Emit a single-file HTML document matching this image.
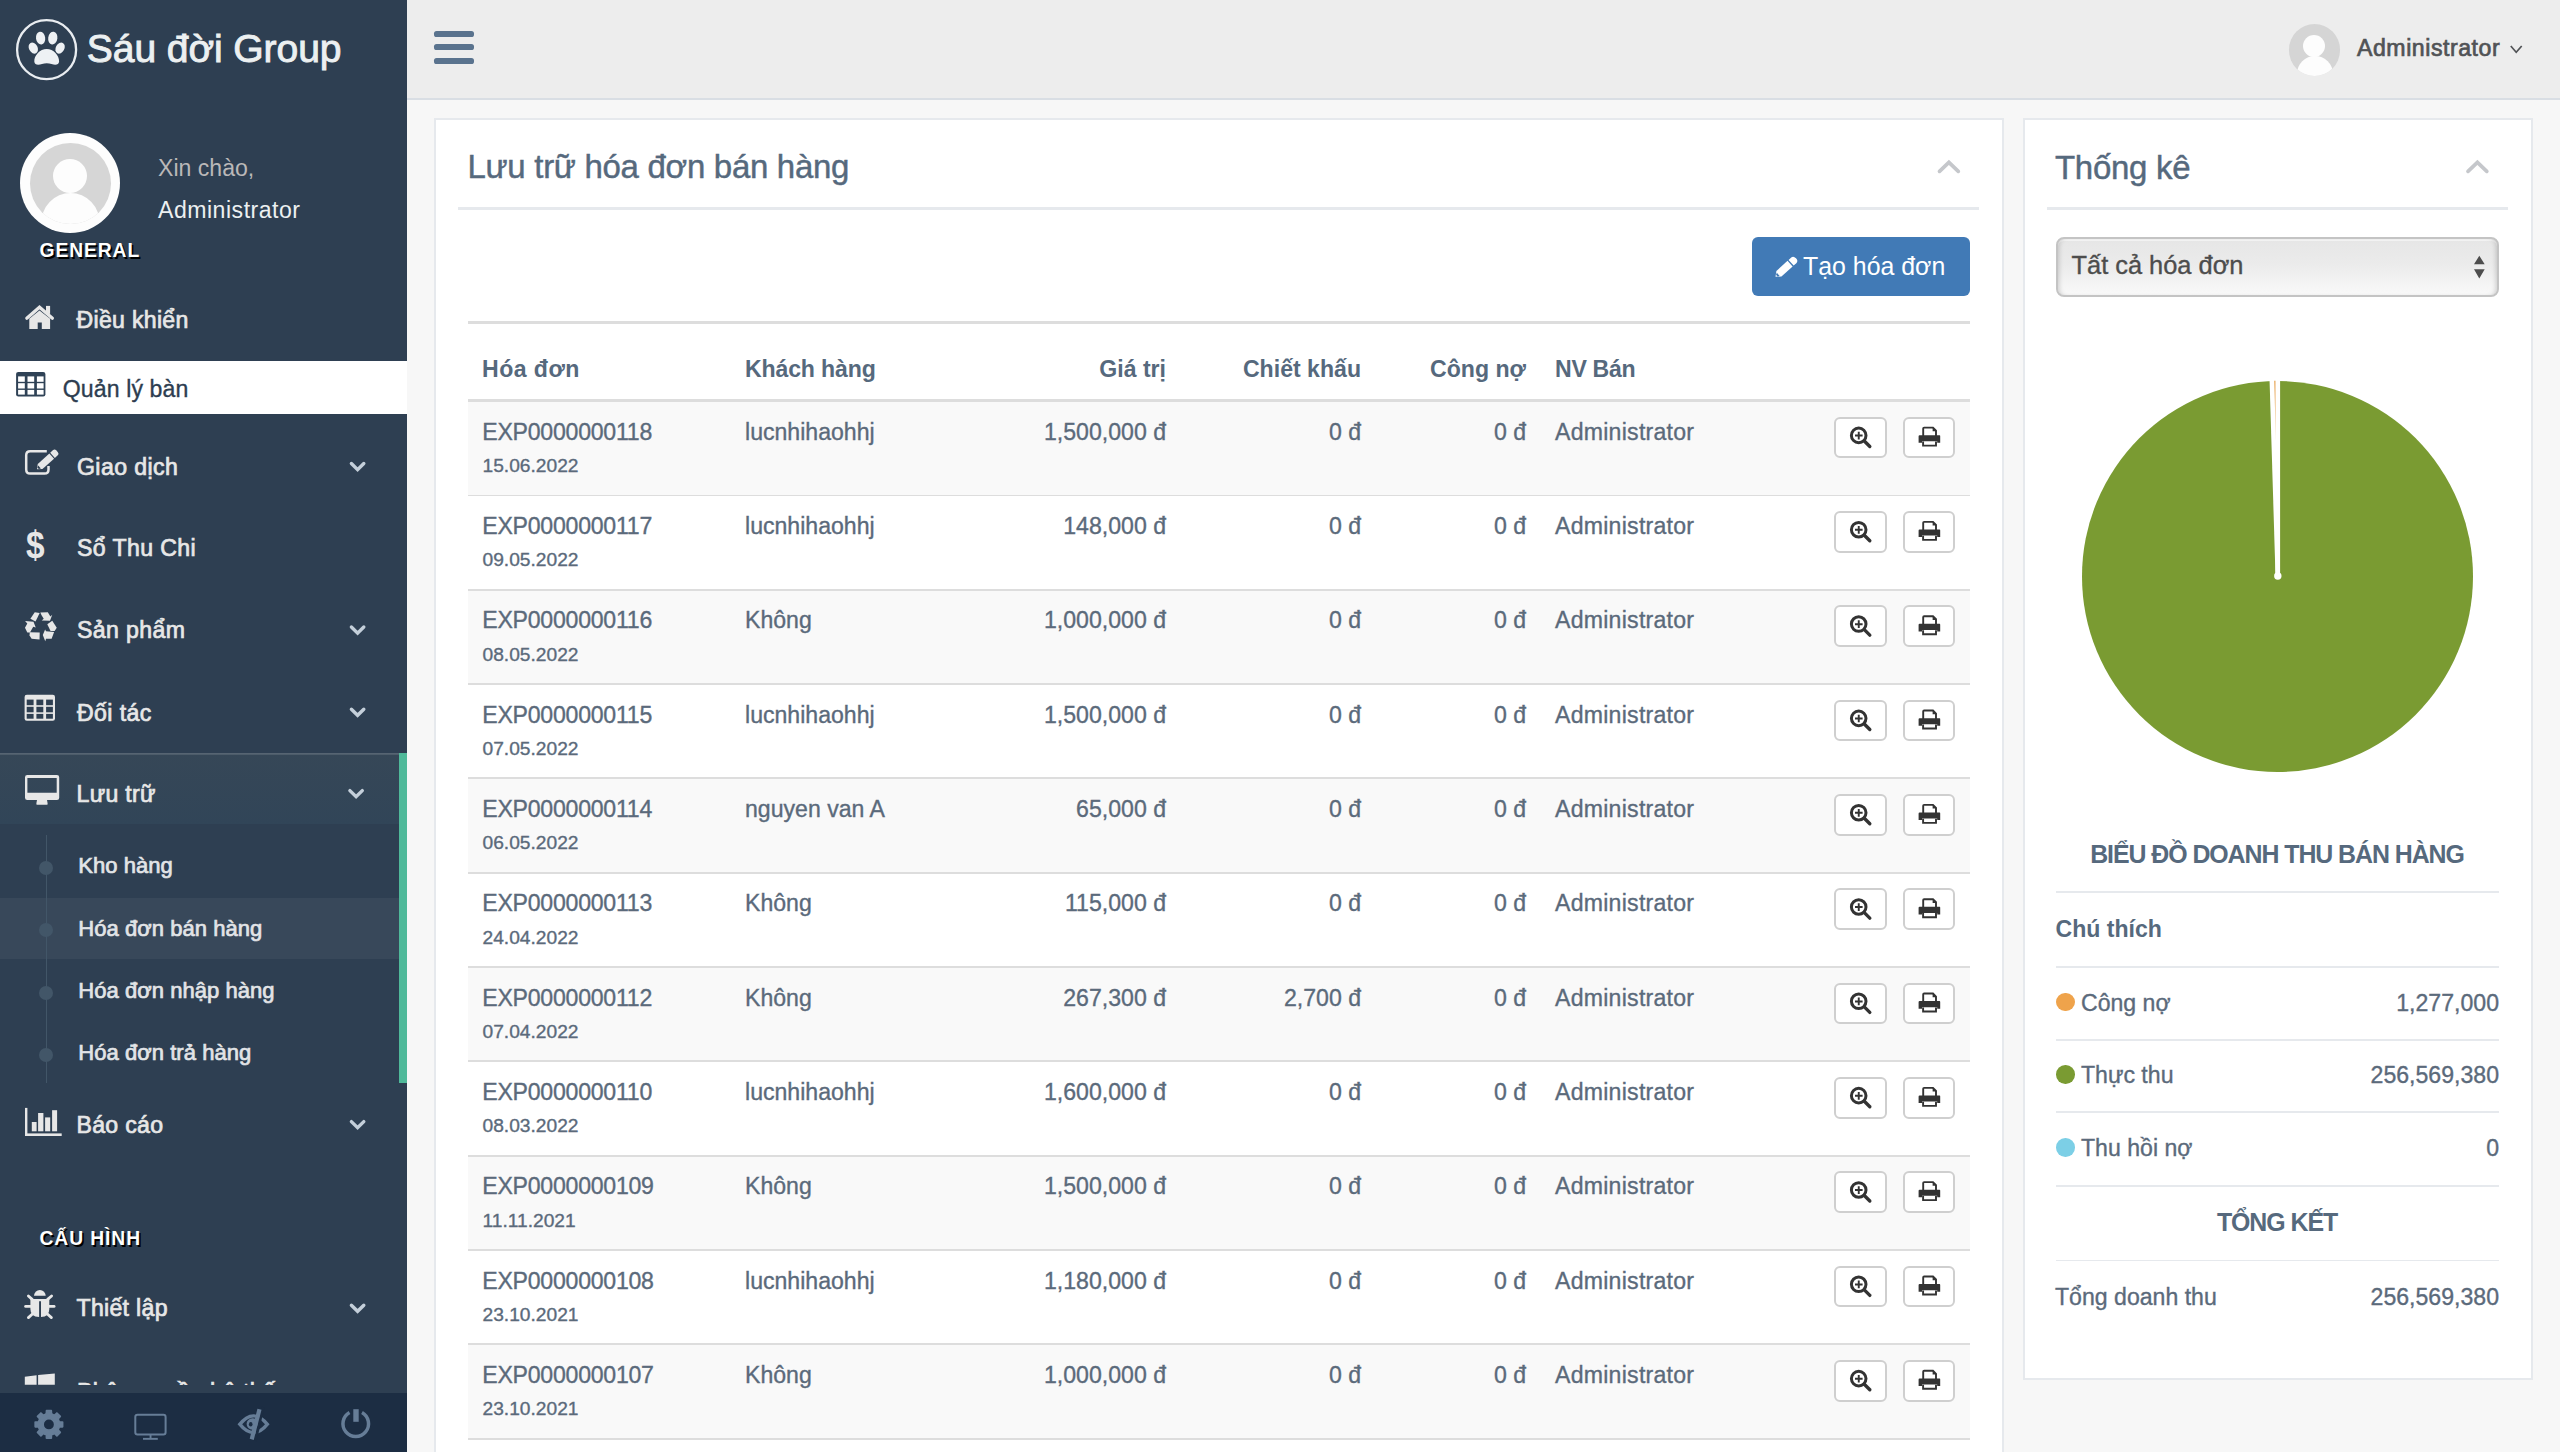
<!DOCTYPE html><html><head><meta charset="utf-8"><style>
html,body{margin:0;padding:0;width:2560px;height:1452px;overflow:hidden;background:#F7F7F7;}
body{position:relative;font-family:"Liberation Sans",sans-serif;}
.t{position:absolute;white-space:nowrap;line-height:1;}
.r{position:absolute;}
.med{-webkit-text-stroke:0.7px currentColor;}
.rg{-webkit-text-stroke:0.35px currentColor;}
.rt{-webkit-text-stroke:0.45px currentColor;}
svg{position:absolute;overflow:visible;}
</style></head><body>
<div class="r" style="left:0px;top:0px;width:407px;height:1452px;background:#2E3F52;"></div>
<div class="t " style="left:86.80px;top:28.90px;font-size:39.1px;color:#ECF0F1;-webkit-text-stroke:0.9px #ECF0F1;letter-spacing:-0.1px;">Sáu đời Group</div>
<div class="r" style="left:20px;top:133px;width:100px;height:100px;border-radius:50%;background:#FDFDFD;"></div>
<div class="r" style="left:29.5px;top:142.5px;width:81px;height:81px;border-radius:50%;background:#D6D6D6;overflow:hidden;"><div style="position:absolute;left:23px;top:16.5px;width:34px;height:34px;border-radius:50%;background:#FDFDFD;"></div><div style="position:absolute;left:11px;top:50px;width:59px;height:62px;border-radius:50%;background:#FDFDFD;"></div></div>
<div class="t " style="left:158.00px;top:156.75px;font-size:23.1px;color:#BAB8B8;">Xin chào,</div>
<div class="t " style="left:158.00px;top:199.25px;font-size:23.1px;color:#ECF0F1;letter-spacing:0.5px;">Administrator</div>
<div class="t " style="left:39.50px;top:241.16px;font-size:19.3px;color:#FFFFFF;font-weight:700;letter-spacing:0.9px;text-shadow:1.8px 1.8px 0 #000;">GENERAL</div>
<div class="t med" style="left:76.50px;top:309.45px;font-size:23.1px;color:#E7E7E7;letter-spacing:0.3px;">Điều khiển</div>
<div class="r" style="left:0px;top:361px;width:407px;height:53px;background:#FFFFFF;"></div>
<div class="t rg" style="left:62.80px;top:378.25px;font-size:23.1px;color:#2D3D50;letter-spacing:0.1px;">Quản lý bàn</div>
<div class="t med" style="left:77.00px;top:455.95px;font-size:23.1px;color:#E7E7E7;letter-spacing:0.4px;">Giao dịch</div>
<div class="t med" style="left:77.00px;top:536.95px;font-size:23.1px;color:#E7E7E7;letter-spacing:0.4px;">Sổ Thu Chi</div>
<div class="t med" style="left:77.00px;top:619.35px;font-size:23.1px;color:#E7E7E7;letter-spacing:0.4px;">Sản phẩm</div>
<div class="t med" style="left:77.00px;top:701.75px;font-size:23.1px;color:#E7E7E7;letter-spacing:0.4px;">Đối tác</div>
<div class="r" style="left:0;top:753px;width:407px;height:71px;background:linear-gradient(#364757,#314558);box-shadow:inset 0 1.8px 0 rgba(255,255,255,0.16);"></div>
<div class="r" style="left:398.5px;top:753px;width:8.5px;height:330px;background:#4FB99A;"></div>
<div class="t med" style="left:76.50px;top:783.05px;font-size:23.1px;color:#E7E7E7;letter-spacing:0.3px;">Lưu trữ</div>
<div class="r" style="left:0px;top:897.5px;width:399px;height:61px;background:rgba(255,255,255,0.05);"></div>
<div class="r" style="left:45.5px;top:834.5px;width:1.8px;height:248.5px;background:#425668;"></div>
<div class="r" style="left:39.3px;top:860.6px;width:14.2px;height:14.2px;border-radius:50%;background:#425668;"></div>
<div class="r" style="left:39.3px;top:922.9px;width:14.2px;height:14.2px;border-radius:50%;background:#425668;"></div>
<div class="r" style="left:39.3px;top:985.9px;width:14.2px;height:14.2px;border-radius:50%;background:#425668;"></div>
<div class="r" style="left:39.3px;top:1047.9px;width:14.2px;height:14.2px;border-radius:50%;background:#425668;"></div>
<div class="t med" style="left:78.30px;top:855.38px;font-size:22px;color:#E2E4E7;letter-spacing:0.05px;">Kho hàng</div>
<div class="t med" style="left:78.30px;top:917.58px;font-size:22px;color:#E2E4E7;letter-spacing:0.05px;">Hóa đơn bán hàng</div>
<div class="t med" style="left:78.30px;top:979.88px;font-size:22px;color:#E2E4E7;letter-spacing:0.05px;">Hóa đơn nhập hàng</div>
<div class="t med" style="left:78.30px;top:1041.88px;font-size:22px;color:#E2E4E7;letter-spacing:0.05px;">Hóa đơn trả hàng</div>
<div class="t med" style="left:76.50px;top:1114.35px;font-size:23.1px;color:#E7E7E7;letter-spacing:0.3px;">Báo cáo</div>
<div class="t " style="left:39.50px;top:1229.26px;font-size:19.3px;color:#FFFFFF;font-weight:700;letter-spacing:0.9px;text-shadow:1.8px 1.8px 0 #000;">CẤU HÌNH</div>
<div class="t med" style="left:76.50px;top:1297.25px;font-size:23.1px;color:#E7E7E7;letter-spacing:0.3px;">Thiết lập</div>
<div class="r" style="left:0;top:1360px;width:407px;height:24.8px;overflow:hidden;"><div class="t med" style="left:77.00px;top:20.75px;font-size:23.1px;color:#E7E7E7;letter-spacing:0.3px;">Phân quyền hệ thống</div>
</div>
<div class="r" style="left:0px;top:1393px;width:407px;height:59px;background:#1C2D43;"></div>
<div class="r" style="left:407px;top:0px;width:2153px;height:98px;background:#EDEDED;"></div>
<div class="r" style="left:407px;top:97.7px;width:2153px;height:2px;background:#D9DEE4;"></div>
<div class="r" style="left:434px;top:31.1px;width:39.7px;height:6.2px;border-radius:2.6px;background:#5A738E;"></div>
<div class="r" style="left:434px;top:44.3px;width:39.7px;height:6.2px;border-radius:2.6px;background:#5A738E;"></div>
<div class="r" style="left:434px;top:57.6px;width:39.7px;height:6.2px;border-radius:2.6px;background:#5A738E;"></div>
<div class="r" style="left:2288.7px;top:24px;width:51.5px;height:51.5px;border-radius:50%;background:#D5D5D5;overflow:hidden;"><div style="position:absolute;left:14.7px;top:11.2px;width:22px;height:22px;border-radius:50%;background:#FDFDFD;"></div><div style="position:absolute;left:8px;top:32px;width:36px;height:36px;border-radius:50%;background:#FDFDFD;"></div></div>
<div class="t med" style="left:2357.00px;top:37.35px;font-size:23.1px;color:#515356;letter-spacing:0.55px;">Administrator</div>
<div class="r" style="left:434px;top:118px;width:1566px;height:1400px;background:#fff;border:2px solid #E6E9ED;"></div>
<div class="t rt" style="left:467.50px;top:150.07px;font-size:33px;color:#56697D;letter-spacing:-0.3px;">Lưu trữ hóa đơn bán hàng</div>
<div class="r" style="left:458.4px;top:206.5px;width:1521px;height:3.5px;background:#E6E9ED;"></div>
<div class="r" style="left:1752.3px;top:236.9px;width:217.7px;height:59.5px;border-radius:6px;background:#417AB6;"></div>
<div class="t " style="left:1803.00px;top:254.42px;font-size:24.9px;color:#FFFFFF;">Tạo hóa đơn</div>
<div class="r" style="left:468px;top:320.5px;width:1502px;height:3px;background:#DDDDDD;"></div>
<div class="t " style="left:482.00px;top:358.45px;font-size:23.1px;color:#56697D;font-weight:700;letter-spacing:0.45px;">Hóa đơn</div>
<div class="t " style="left:745.00px;top:358.45px;font-size:23.1px;color:#56697D;font-weight:700;letter-spacing:-0.15px;">Khách hàng</div>
<div class="t " style="right:1394.00px;top:358.45px;font-size:23.1px;color:#56697D;font-weight:700;letter-spacing:0px;">Giá trị</div>
<div class="t " style="right:1199.00px;top:358.45px;font-size:23.1px;color:#56697D;font-weight:700;letter-spacing:0px;">Chiết khấu</div>
<div class="t " style="right:1034.00px;top:358.45px;font-size:23.1px;color:#56697D;font-weight:700;letter-spacing:0px;">Công nợ</div>
<div class="t " style="left:1555.00px;top:358.45px;font-size:23.1px;color:#56697D;font-weight:700;letter-spacing:-0.3px;">NV Bán</div>
<div class="r" style="left:468px;top:399px;width:1502px;height:3px;background:#DDDDDD;"></div>
<div class="r" style="left:468px;top:402.0px;width:1502px;height:92.52px;background:#F9F9F9;"></div>
<div class="t rg" style="left:482.30px;top:420.65px;font-size:23.1px;color:#5B6A7B;letter-spacing:-0.25px;">EXP0000000118</div>
<div class="t rg" style="left:482.50px;top:456.15px;font-size:19.2px;color:#5B6A7B;">15.06.2022</div>
<div class="t rg" style="left:745.00px;top:420.65px;font-size:23.1px;color:#5B6A7B;">lucnhihaohhj</div>
<div class="t rg" style="right:1394.00px;top:420.65px;font-size:23.1px;color:#5B6A7B;">1,500,000 đ</div>
<div class="t rg" style="right:1199.00px;top:420.65px;font-size:23.1px;color:#5B6A7B;">0 đ</div>
<div class="t rg" style="right:1034.00px;top:420.65px;font-size:23.1px;color:#5B6A7B;">0 đ</div>
<div class="t rg" style="left:1555.00px;top:420.65px;font-size:23.1px;color:#5B6A7B;letter-spacing:0.25px;">Administrator</div>
<div class="r" style="left:1834.4px;top:416.80px;width:48.6px;height:37.7px;border:2px solid #CFCFCF;border-radius:6px;background:#fff;"></div>
<div class="r" style="left:1902.7px;top:416.80px;width:48.6px;height:37.7px;border:2px solid #CFCFCF;border-radius:6px;background:#fff;"></div>
<div class="r" style="left:468px;top:494.52px;width:1502px;height:1.8px;background:#DDDDDD;"></div>
<div class="r" style="left:468px;top:496.32px;width:1502px;height:92.52px;background:#FFFFFF;"></div>
<div class="t rg" style="left:482.30px;top:514.97px;font-size:23.1px;color:#5B6A7B;letter-spacing:-0.25px;">EXP0000000117</div>
<div class="t rg" style="left:482.50px;top:550.47px;font-size:19.2px;color:#5B6A7B;">09.05.2022</div>
<div class="t rg" style="left:745.00px;top:514.97px;font-size:23.1px;color:#5B6A7B;">lucnhihaohhj</div>
<div class="t rg" style="right:1394.00px;top:514.97px;font-size:23.1px;color:#5B6A7B;">148,000 đ</div>
<div class="t rg" style="right:1199.00px;top:514.97px;font-size:23.1px;color:#5B6A7B;">0 đ</div>
<div class="t rg" style="right:1034.00px;top:514.97px;font-size:23.1px;color:#5B6A7B;">0 đ</div>
<div class="t rg" style="left:1555.00px;top:514.97px;font-size:23.1px;color:#5B6A7B;letter-spacing:0.25px;">Administrator</div>
<div class="r" style="left:1834.4px;top:511.12px;width:48.6px;height:37.7px;border:2px solid #CFCFCF;border-radius:6px;background:#fff;"></div>
<div class="r" style="left:1902.7px;top:511.12px;width:48.6px;height:37.7px;border:2px solid #CFCFCF;border-radius:6px;background:#fff;"></div>
<div class="r" style="left:468px;top:588.84px;width:1502px;height:1.8px;background:#DDDDDD;"></div>
<div class="r" style="left:468px;top:590.64px;width:1502px;height:92.52px;background:#F9F9F9;"></div>
<div class="t rg" style="left:482.30px;top:609.29px;font-size:23.1px;color:#5B6A7B;letter-spacing:-0.25px;">EXP0000000116</div>
<div class="t rg" style="left:482.50px;top:644.79px;font-size:19.2px;color:#5B6A7B;">08.05.2022</div>
<div class="t rg" style="left:745.00px;top:609.29px;font-size:23.1px;color:#5B6A7B;">Không</div>
<div class="t rg" style="right:1394.00px;top:609.29px;font-size:23.1px;color:#5B6A7B;">1,000,000 đ</div>
<div class="t rg" style="right:1199.00px;top:609.29px;font-size:23.1px;color:#5B6A7B;">0 đ</div>
<div class="t rg" style="right:1034.00px;top:609.29px;font-size:23.1px;color:#5B6A7B;">0 đ</div>
<div class="t rg" style="left:1555.00px;top:609.29px;font-size:23.1px;color:#5B6A7B;letter-spacing:0.25px;">Administrator</div>
<div class="r" style="left:1834.4px;top:605.44px;width:48.6px;height:37.7px;border:2px solid #CFCFCF;border-radius:6px;background:#fff;"></div>
<div class="r" style="left:1902.7px;top:605.44px;width:48.6px;height:37.7px;border:2px solid #CFCFCF;border-radius:6px;background:#fff;"></div>
<div class="r" style="left:468px;top:683.1600000000001px;width:1502px;height:1.8px;background:#DDDDDD;"></div>
<div class="r" style="left:468px;top:684.96px;width:1502px;height:92.52px;background:#FFFFFF;"></div>
<div class="t rg" style="left:482.30px;top:703.61px;font-size:23.1px;color:#5B6A7B;letter-spacing:-0.25px;">EXP0000000115</div>
<div class="t rg" style="left:482.50px;top:739.11px;font-size:19.2px;color:#5B6A7B;">07.05.2022</div>
<div class="t rg" style="left:745.00px;top:703.61px;font-size:23.1px;color:#5B6A7B;">lucnhihaohhj</div>
<div class="t rg" style="right:1394.00px;top:703.61px;font-size:23.1px;color:#5B6A7B;">1,500,000 đ</div>
<div class="t rg" style="right:1199.00px;top:703.61px;font-size:23.1px;color:#5B6A7B;">0 đ</div>
<div class="t rg" style="right:1034.00px;top:703.61px;font-size:23.1px;color:#5B6A7B;">0 đ</div>
<div class="t rg" style="left:1555.00px;top:703.61px;font-size:23.1px;color:#5B6A7B;letter-spacing:0.25px;">Administrator</div>
<div class="r" style="left:1834.4px;top:699.76px;width:48.6px;height:37.7px;border:2px solid #CFCFCF;border-radius:6px;background:#fff;"></div>
<div class="r" style="left:1902.7px;top:699.76px;width:48.6px;height:37.7px;border:2px solid #CFCFCF;border-radius:6px;background:#fff;"></div>
<div class="r" style="left:468px;top:777.48px;width:1502px;height:1.8px;background:#DDDDDD;"></div>
<div class="r" style="left:468px;top:779.28px;width:1502px;height:92.52px;background:#F9F9F9;"></div>
<div class="t rg" style="left:482.30px;top:797.93px;font-size:23.1px;color:#5B6A7B;letter-spacing:-0.25px;">EXP0000000114</div>
<div class="t rg" style="left:482.50px;top:833.43px;font-size:19.2px;color:#5B6A7B;">06.05.2022</div>
<div class="t rg" style="left:745.00px;top:797.93px;font-size:23.1px;color:#5B6A7B;">nguyen van A</div>
<div class="t rg" style="right:1394.00px;top:797.93px;font-size:23.1px;color:#5B6A7B;">65,000 đ</div>
<div class="t rg" style="right:1199.00px;top:797.93px;font-size:23.1px;color:#5B6A7B;">0 đ</div>
<div class="t rg" style="right:1034.00px;top:797.93px;font-size:23.1px;color:#5B6A7B;">0 đ</div>
<div class="t rg" style="left:1555.00px;top:797.93px;font-size:23.1px;color:#5B6A7B;letter-spacing:0.25px;">Administrator</div>
<div class="r" style="left:1834.4px;top:794.08px;width:48.6px;height:37.7px;border:2px solid #CFCFCF;border-radius:6px;background:#fff;"></div>
<div class="r" style="left:1902.7px;top:794.08px;width:48.6px;height:37.7px;border:2px solid #CFCFCF;border-radius:6px;background:#fff;"></div>
<div class="r" style="left:468px;top:871.8px;width:1502px;height:1.8px;background:#DDDDDD;"></div>
<div class="r" style="left:468px;top:873.5999999999999px;width:1502px;height:92.52px;background:#FFFFFF;"></div>
<div class="t rg" style="left:482.30px;top:892.25px;font-size:23.1px;color:#5B6A7B;letter-spacing:-0.25px;">EXP0000000113</div>
<div class="t rg" style="left:482.50px;top:927.75px;font-size:19.2px;color:#5B6A7B;">24.04.2022</div>
<div class="t rg" style="left:745.00px;top:892.25px;font-size:23.1px;color:#5B6A7B;">Không</div>
<div class="t rg" style="right:1394.00px;top:892.25px;font-size:23.1px;color:#5B6A7B;">115,000 đ</div>
<div class="t rg" style="right:1199.00px;top:892.25px;font-size:23.1px;color:#5B6A7B;">0 đ</div>
<div class="t rg" style="right:1034.00px;top:892.25px;font-size:23.1px;color:#5B6A7B;">0 đ</div>
<div class="t rg" style="left:1555.00px;top:892.25px;font-size:23.1px;color:#5B6A7B;letter-spacing:0.25px;">Administrator</div>
<div class="r" style="left:1834.4px;top:888.40px;width:48.6px;height:37.7px;border:2px solid #CFCFCF;border-radius:6px;background:#fff;"></div>
<div class="r" style="left:1902.7px;top:888.40px;width:48.6px;height:37.7px;border:2px solid #CFCFCF;border-radius:6px;background:#fff;"></div>
<div class="r" style="left:468px;top:966.12px;width:1502px;height:1.8px;background:#DDDDDD;"></div>
<div class="r" style="left:468px;top:967.92px;width:1502px;height:92.52px;background:#F9F9F9;"></div>
<div class="t rg" style="left:482.30px;top:986.57px;font-size:23.1px;color:#5B6A7B;letter-spacing:-0.25px;">EXP0000000112</div>
<div class="t rg" style="left:482.50px;top:1022.07px;font-size:19.2px;color:#5B6A7B;">07.04.2022</div>
<div class="t rg" style="left:745.00px;top:986.57px;font-size:23.1px;color:#5B6A7B;">Không</div>
<div class="t rg" style="right:1394.00px;top:986.57px;font-size:23.1px;color:#5B6A7B;">267,300 đ</div>
<div class="t rg" style="right:1199.00px;top:986.57px;font-size:23.1px;color:#5B6A7B;">2,700 đ</div>
<div class="t rg" style="right:1034.00px;top:986.57px;font-size:23.1px;color:#5B6A7B;">0 đ</div>
<div class="t rg" style="left:1555.00px;top:986.57px;font-size:23.1px;color:#5B6A7B;letter-spacing:0.25px;">Administrator</div>
<div class="r" style="left:1834.4px;top:982.72px;width:48.6px;height:37.7px;border:2px solid #CFCFCF;border-radius:6px;background:#fff;"></div>
<div class="r" style="left:1902.7px;top:982.72px;width:48.6px;height:37.7px;border:2px solid #CFCFCF;border-radius:6px;background:#fff;"></div>
<div class="r" style="left:468px;top:1060.44px;width:1502px;height:1.8px;background:#DDDDDD;"></div>
<div class="r" style="left:468px;top:1062.24px;width:1502px;height:92.52px;background:#FFFFFF;"></div>
<div class="t rg" style="left:482.30px;top:1080.89px;font-size:23.1px;color:#5B6A7B;letter-spacing:-0.25px;">EXP0000000110</div>
<div class="t rg" style="left:482.50px;top:1116.39px;font-size:19.2px;color:#5B6A7B;">08.03.2022</div>
<div class="t rg" style="left:745.00px;top:1080.89px;font-size:23.1px;color:#5B6A7B;">lucnhihaohhj</div>
<div class="t rg" style="right:1394.00px;top:1080.89px;font-size:23.1px;color:#5B6A7B;">1,600,000 đ</div>
<div class="t rg" style="right:1199.00px;top:1080.89px;font-size:23.1px;color:#5B6A7B;">0 đ</div>
<div class="t rg" style="right:1034.00px;top:1080.89px;font-size:23.1px;color:#5B6A7B;">0 đ</div>
<div class="t rg" style="left:1555.00px;top:1080.89px;font-size:23.1px;color:#5B6A7B;letter-spacing:0.25px;">Administrator</div>
<div class="r" style="left:1834.4px;top:1077.04px;width:48.6px;height:37.7px;border:2px solid #CFCFCF;border-radius:6px;background:#fff;"></div>
<div class="r" style="left:1902.7px;top:1077.04px;width:48.6px;height:37.7px;border:2px solid #CFCFCF;border-radius:6px;background:#fff;"></div>
<div class="r" style="left:468px;top:1154.76px;width:1502px;height:1.8px;background:#DDDDDD;"></div>
<div class="r" style="left:468px;top:1156.56px;width:1502px;height:92.52px;background:#F9F9F9;"></div>
<div class="t rg" style="left:482.30px;top:1175.21px;font-size:23.1px;color:#5B6A7B;letter-spacing:-0.25px;">EXP0000000109</div>
<div class="t rg" style="left:482.50px;top:1210.71px;font-size:19.2px;color:#5B6A7B;">11.11.2021</div>
<div class="t rg" style="left:745.00px;top:1175.21px;font-size:23.1px;color:#5B6A7B;">Không</div>
<div class="t rg" style="right:1394.00px;top:1175.21px;font-size:23.1px;color:#5B6A7B;">1,500,000 đ</div>
<div class="t rg" style="right:1199.00px;top:1175.21px;font-size:23.1px;color:#5B6A7B;">0 đ</div>
<div class="t rg" style="right:1034.00px;top:1175.21px;font-size:23.1px;color:#5B6A7B;">0 đ</div>
<div class="t rg" style="left:1555.00px;top:1175.21px;font-size:23.1px;color:#5B6A7B;letter-spacing:0.25px;">Administrator</div>
<div class="r" style="left:1834.4px;top:1171.36px;width:48.6px;height:37.7px;border:2px solid #CFCFCF;border-radius:6px;background:#fff;"></div>
<div class="r" style="left:1902.7px;top:1171.36px;width:48.6px;height:37.7px;border:2px solid #CFCFCF;border-radius:6px;background:#fff;"></div>
<div class="r" style="left:468px;top:1249.08px;width:1502px;height:1.8px;background:#DDDDDD;"></div>
<div class="r" style="left:468px;top:1250.8799999999999px;width:1502px;height:92.52px;background:#FFFFFF;"></div>
<div class="t rg" style="left:482.30px;top:1269.53px;font-size:23.1px;color:#5B6A7B;letter-spacing:-0.25px;">EXP0000000108</div>
<div class="t rg" style="left:482.50px;top:1305.03px;font-size:19.2px;color:#5B6A7B;">23.10.2021</div>
<div class="t rg" style="left:745.00px;top:1269.53px;font-size:23.1px;color:#5B6A7B;">lucnhihaohhj</div>
<div class="t rg" style="right:1394.00px;top:1269.53px;font-size:23.1px;color:#5B6A7B;">1,180,000 đ</div>
<div class="t rg" style="right:1199.00px;top:1269.53px;font-size:23.1px;color:#5B6A7B;">0 đ</div>
<div class="t rg" style="right:1034.00px;top:1269.53px;font-size:23.1px;color:#5B6A7B;">0 đ</div>
<div class="t rg" style="left:1555.00px;top:1269.53px;font-size:23.1px;color:#5B6A7B;letter-spacing:0.25px;">Administrator</div>
<div class="r" style="left:1834.4px;top:1265.68px;width:48.6px;height:37.7px;border:2px solid #CFCFCF;border-radius:6px;background:#fff;"></div>
<div class="r" style="left:1902.7px;top:1265.68px;width:48.6px;height:37.7px;border:2px solid #CFCFCF;border-radius:6px;background:#fff;"></div>
<div class="r" style="left:468px;top:1343.3999999999999px;width:1502px;height:1.8px;background:#DDDDDD;"></div>
<div class="r" style="left:468px;top:1345.1999999999998px;width:1502px;height:92.52px;background:#F9F9F9;"></div>
<div class="t rg" style="left:482.30px;top:1363.85px;font-size:23.1px;color:#5B6A7B;letter-spacing:-0.25px;">EXP0000000107</div>
<div class="t rg" style="left:482.50px;top:1399.35px;font-size:19.2px;color:#5B6A7B;">23.10.2021</div>
<div class="t rg" style="left:745.00px;top:1363.85px;font-size:23.1px;color:#5B6A7B;">Không</div>
<div class="t rg" style="right:1394.00px;top:1363.85px;font-size:23.1px;color:#5B6A7B;">1,000,000 đ</div>
<div class="t rg" style="right:1199.00px;top:1363.85px;font-size:23.1px;color:#5B6A7B;">0 đ</div>
<div class="t rg" style="right:1034.00px;top:1363.85px;font-size:23.1px;color:#5B6A7B;">0 đ</div>
<div class="t rg" style="left:1555.00px;top:1363.85px;font-size:23.1px;color:#5B6A7B;letter-spacing:0.25px;">Administrator</div>
<div class="r" style="left:1834.4px;top:1360.00px;width:48.6px;height:37.7px;border:2px solid #CFCFCF;border-radius:6px;background:#fff;"></div>
<div class="r" style="left:1902.7px;top:1360.00px;width:48.6px;height:37.7px;border:2px solid #CFCFCF;border-radius:6px;background:#fff;"></div>
<div class="r" style="left:468px;top:1437.72px;width:1502px;height:1.8px;background:#DDDDDD;"></div>
<div class="r" style="left:2023px;top:118px;width:506px;height:1258px;background:#fff;border:2px solid #E6E9ED;"></div>
<div class="t rt" style="left:2055.00px;top:151.07px;font-size:33px;color:#56697D;letter-spacing:-0.3px;">Thống kê</div>
<div class="r" style="left:2046.8px;top:206.5px;width:461.5px;height:3.5px;background:#E6E9ED;"></div>
<div class="r" style="left:2056px;top:237px;width:439px;height:55.6px;border:2px solid #C4C4C4;border-radius:8px;background:linear-gradient(#E6E6E6,#EBEBEB 45%,#F9F9F9);box-shadow:inset 4px 0 5px -3px rgba(0,0,0,0.18),inset -4px 0 5px -3px rgba(0,0,0,0.18),inset 0 2px 0 #F4F4F4;"></div>
<div class="t rg" style="left:2071.50px;top:253.30px;font-size:25.4px;color:#4D4D4D;">Tất cả hóa đơn</div>
<div class="r" style="left:2082.4px;top:380.6px;width:391px;height:391px;border-radius:50%;background:#7A9B32;"></div>
<div class="t " style="left:1777.00px;width:1000px;text-align:center;top:842.22px;font-size:24.9px;color:#56697D;font-weight:700;letter-spacing:-1.05px;">BIỂU ĐỒ DOANH THU BÁN HÀNG</div>
<div class="r" style="left:2055.5px;top:891px;width:443.5px;height:1.8px;background:#E6E9ED;"></div>
<div class="r" style="left:2055.5px;top:966px;width:443.5px;height:1.8px;background:#E6E9ED;"></div>
<div class="r" style="left:2055.5px;top:1039px;width:443.5px;height:1.8px;background:#E6E9ED;"></div>
<div class="r" style="left:2055.5px;top:1111.4px;width:443.5px;height:1.8px;background:#E6E9ED;"></div>
<div class="r" style="left:2055.5px;top:1185px;width:443.5px;height:1.8px;background:#E6E9ED;"></div>
<div class="r" style="left:2055.5px;top:1259.5px;width:443.5px;height:1.8px;background:#E6E9ED;"></div>
<div class="t " style="left:2055.50px;top:917.85px;font-size:23.1px;color:#56697D;font-weight:700;">Chú thích</div>
<div class="r" style="left:2056.4px;top:992.7px;width:18.6px;height:18.6px;border-radius:50%;background:#EFA34B;"></div>
<div class="t rg" style="left:2081.00px;top:991.95px;font-size:23.1px;color:#5B6A7B;">Công nợ</div>
<div class="t rg" style="right:61.00px;top:991.95px;font-size:23.1px;color:#5B6A7B;">1,277,000</div>
<div class="r" style="left:2056.4px;top:1065.2px;width:18.6px;height:18.6px;border-radius:50%;background:#7A9B32;"></div>
<div class="t rg" style="left:2081.00px;top:1064.45px;font-size:23.1px;color:#5B6A7B;">Thực thu</div>
<div class="t rg" style="right:61.00px;top:1064.45px;font-size:23.1px;color:#5B6A7B;">256,569,380</div>
<div class="r" style="left:2056.4px;top:1138.2px;width:18.6px;height:18.6px;border-radius:50%;background:#7CCFE6;"></div>
<div class="t rg" style="left:2081.00px;top:1137.45px;font-size:23.1px;color:#5B6A7B;">Thu hồi nợ</div>
<div class="t rg" style="right:61.00px;top:1137.45px;font-size:23.1px;color:#5B6A7B;">0</div>
<div class="t " style="left:1777.00px;width:1000px;text-align:center;top:1210.32px;font-size:24.9px;color:#56697D;font-weight:700;letter-spacing:-1.05px;">TỔNG KẾT</div>
<div class="t rg" style="left:2055.00px;top:1285.95px;font-size:23.1px;color:#5B6A7B;">Tổng doanh thu</div>
<div class="t rg" style="right:61.00px;top:1285.95px;font-size:23.1px;color:#5B6A7B;">256,569,380</div>
<div class="t " style="left:25.50px;top:525.96px;font-size:38.8px;color:#E7E7E7;font-weight:700;transform:scaleX(0.86);transform-origin:0 0;">$</div>
<svg width="2560" height="1452" style="left:0;top:0;position:absolute;"><defs><clipPath id="clipw"><rect x="0" y="1360" width="407" height="24.8"/></clipPath></defs>
<circle cx="46.6" cy="49.7" r="29.5" fill="none" stroke="#E9EDF1" stroke-width="2.3"/>
<ellipse cx="40.6" cy="38.1" rx="4.6" ry="6.5" transform="rotate(-8 40.6 38.1)" fill="#EEF1F4"/>
<ellipse cx="52.8" cy="38.1" rx="4.6" ry="6.5" transform="rotate(8 52.8 38.1)" fill="#EEF1F4"/>
<ellipse cx="33.3" cy="48.1" rx="4.3" ry="5.9" transform="rotate(-28 33.3 48.1)" fill="#EEF1F4"/>
<ellipse cx="60.1" cy="48.1" rx="4.3" ry="5.9" transform="rotate(28 60.1 48.1)" fill="#EEF1F4"/>
<path d="M34.3,61.5 C34,55.5 40,49 46.7,49 C53.4,49 59.4,55.5 59.1,61.5 C58.8,64.8 55.5,65.3 51.5,63.9 C48.5,62.9 45,62.9 42,63.9 C38,65.3 34.6,64.8 34.3,61.5 Z" fill="#EEF1F4"/>
<polyline points="26.8,318.2 39.5,307.2 52.4,318.2" fill="none" stroke="#E7E7E7" stroke-width="3.2" stroke-linecap="round" stroke-linejoin="miter"/>
<rect x="46" y="305.9" width="4.1" height="8" fill="#E7E7E7"/>
<path d="M29.3,328.9 V318.8 L39.5,310.6 L50.1,318.8 V328.9 H41.8 V322.4 H37.7 V328.9 Z" fill="#E7E7E7"/>
<rect x="16.1" y="371.9" width="29.3" height="24.6" rx="2.2" fill="#2F4256"/>
<rect x="18.1" y="376.4" width="6.7" height="5.4" fill="#FFFFFF"/>
<rect x="18.1" y="383.2" width="6.7" height="5.3" fill="#FFFFFF"/>
<rect x="18.1" y="389.9" width="6.7" height="4.7" fill="#FFFFFF"/>
<rect x="27.5" y="376.4" width="6.7" height="5.4" fill="#FFFFFF"/>
<rect x="27.5" y="383.2" width="6.7" height="5.3" fill="#FFFFFF"/>
<rect x="27.5" y="389.9" width="6.7" height="4.7" fill="#FFFFFF"/>
<rect x="36.9" y="376.4" width="6.7" height="5.4" fill="#FFFFFF"/>
<rect x="36.9" y="383.2" width="6.7" height="5.3" fill="#FFFFFF"/>
<rect x="36.9" y="389.9" width="6.7" height="4.7" fill="#FFFFFF"/>
<path d="M46.8,451.2 H30.2 Q26.2,451.2 26.2,455.2 V469.5 Q26.2,473.6 30.2,473.6 H44.5 Q48.5,473.6 48.5,469.5 V466" fill="none" stroke="#E7E7E7" stroke-width="2.5"/>
<g transform="translate(37,469.3) rotate(-42)"><path d="M0,0 L4.2,-3.5 H19.8 V3.5 H4.2 Z" fill="#E7E7E7"/><path d="M20.9,-3.5 H24.8 Q27,-3.5 27,-1.2 V1.2 Q27,3.5 24.8,3.5 H20.9 Z" fill="#E7E7E7"/><path d="M1.5,-1.1 L3.4,-2 V2 L1.5,1.1 Z" fill="#2E3F52"/></g>
<path d="M30.40,618.79 L34.74,612.28 L39.70,613.12 L35.51,621.43 Z" fill="#E7E7E7"/>
<path d="M40.32,612.38 L47.82,612.28 L50.39,616.53 L52.25,614.86 L49.99,620.81 L41.71,620.50 L43.73,618.70 L41.56,615.23 Z" fill="#E7E7E7"/>
<path d="M47.29,624.37 L52.25,620.65 L56.75,627.63 L54.64,630.88 L50.55,630.88 Z" fill="#E7E7E7"/>
<path d="M42.80,634.91 L45.12,629.49 L46.05,631.35 L54.11,631.91 L51.63,638.79 L46.05,638.79 L45.28,641.27 Z" fill="#E7E7E7"/>
<path d="M29.78,632.28 L39.70,632.59 L39.54,639.41 L31.64,638.85 L29.53,635.53 Z" fill="#E7E7E7"/>
<path d="M25.07,621.12 L33.50,621.74 L35.73,627.57 L33.25,626.70 L29.93,632.59 L27.30,632.59 L24.97,627.63 L27.30,623.60 Z" fill="#E7E7E7"/>
<rect x="24.6" y="694.8" width="30.4" height="26" rx="2.2" fill="#E7E7E7"/>
<rect x="26.7" y="699.6" width="6.9" height="5.6" fill="#2E3F52"/>
<rect x="26.7" y="706.8" width="6.9" height="5.5" fill="#2E3F52"/>
<rect x="26.7" y="713.9" width="6.9" height="4.8" fill="#2E3F52"/>
<rect x="36.4" y="699.6" width="6.9" height="5.6" fill="#2E3F52"/>
<rect x="36.4" y="706.8" width="6.9" height="5.5" fill="#2E3F52"/>
<rect x="36.4" y="713.9" width="6.9" height="4.8" fill="#2E3F52"/>
<rect x="46.1" y="699.6" width="6.8" height="5.6" fill="#2E3F52"/>
<rect x="46.1" y="706.8" width="6.8" height="5.5" fill="#2E3F52"/>
<rect x="46.1" y="713.9" width="6.8" height="4.8" fill="#2E3F52"/>
<path d="M27.3,775 H56.9 Q59.2,775 59.2,777.3 V797.8 Q59.2,800.1 56.9,800.1 H27.3 Q25,800.1 25,797.8 V777.3 Q25,775 27.3,775 Z M27.4,777.9 V792.8 H56.7 V777.9 Z" fill="#E7E7E7" fill-rule="evenodd"/>
<path d="M37,800 H47 L47.6,803.2 Q48,804.7 46.8,804.7 H37.2 Q36,804.7 36.4,803.2 Z" fill="#E7E7E7"/>
<rect x="25" y="1107.9" width="2.4" height="28.1" fill="#E7E7E7"/>
<rect x="25" y="1133.4" width="36.7" height="2.6" fill="#E7E7E7"/>
<rect x="31.8" y="1122" width="4.8" height="9.3" fill="#E7E7E7"/>
<rect x="38.1" y="1113" width="5.3" height="18.3" fill="#E7E7E7"/>
<rect x="45.1" y="1117.4" width="5.1" height="13.9" fill="#E7E7E7"/>
<rect x="52.1" y="1110.2" width="5.0" height="21.1" fill="#E7E7E7"/>
<path d="M34,1295.8 A5.85,5.85 0 0 1 45.7,1295.8 Z" fill="#E7E7E7"/>
<path d="M30.4,1299 H49.3 V1309 Q49.3,1316.9 41,1317 V1301.2 H39.1 V1317 Q30.4,1316.9 30.4,1309 Z" fill="#E7E7E7"/>
<line x1="28.4" y1="1296" x2="32.2" y2="1299.4" stroke="#E7E7E7" stroke-width="2.8" stroke-linecap="round"/>
<line x1="51.6" y1="1296" x2="47.6" y2="1299.4" stroke="#E7E7E7" stroke-width="2.8" stroke-linecap="round"/>
<line x1="25.6" y1="1306.4" x2="31" y2="1306.4" stroke="#E7E7E7" stroke-width="2.8" stroke-linecap="round"/>
<line x1="54.1" y1="1306.4" x2="48.8" y2="1306.4" stroke="#E7E7E7" stroke-width="2.8" stroke-linecap="round"/>
<line x1="28.4" y1="1317.6" x2="32.4" y2="1314" stroke="#E7E7E7" stroke-width="2.8" stroke-linecap="round"/>
<line x1="51.4" y1="1317.6" x2="47.4" y2="1314" stroke="#E7E7E7" stroke-width="2.8" stroke-linecap="round"/>
<g clip-path="url(#clipw)"><path d="M24.8,1376.8 L36.6,1375.2 V1395 H24.8 Z M38.1,1375 L54.8,1373.4 V1395 H38.1 Z" fill="#E7E7E7"/></g>
<polyline points="351.4,463.5 357.6,469.6 363.8,463.5" fill="none" stroke="#C4CFDA" stroke-width="3.4" stroke-linecap="round" stroke-linejoin="miter"/>
<polyline points="351.4,627 357.6,633.1 363.8,627" fill="none" stroke="#C4CFDA" stroke-width="3.4" stroke-linecap="round" stroke-linejoin="miter"/>
<polyline points="351.4,709.2 357.6,715.3000000000001 363.8,709.2" fill="none" stroke="#C4CFDA" stroke-width="3.4" stroke-linecap="round" stroke-linejoin="miter"/>
<polyline points="349.9,790.6 356.1,796.7 362.3,790.6" fill="none" stroke="#C4CFDA" stroke-width="3.4" stroke-linecap="round" stroke-linejoin="miter"/>
<polyline points="351.4,1121.6 357.6,1127.6999999999998 363.8,1121.6" fill="none" stroke="#C4CFDA" stroke-width="3.4" stroke-linecap="round" stroke-linejoin="miter"/>
<polyline points="351.4,1305.2 357.6,1311.3 363.8,1305.2" fill="none" stroke="#C4CFDA" stroke-width="3.4" stroke-linecap="round" stroke-linejoin="miter"/>
<path d="M44.42,1414.79 L46.34,1414.11 L46.49,1410.71 L51.31,1410.71 L51.46,1414.11 L53.38,1414.79 L52.53,1414.44 L54.36,1415.31 L56.87,1413.01 L60.29,1416.43 L57.99,1418.94 L58.86,1420.77 L58.51,1419.92 L59.19,1421.84 L62.59,1421.99 L62.59,1426.81 L59.19,1426.96 L58.51,1428.88 L58.86,1428.03 L57.99,1429.86 L60.29,1432.37 L56.87,1435.79 L54.36,1433.49 L52.53,1434.36 L53.38,1434.01 L51.46,1434.69 L51.31,1438.09 L46.49,1438.09 L46.34,1434.69 L44.42,1434.01 L45.27,1434.36 L43.44,1433.49 L40.93,1435.79 L37.51,1432.37 L39.81,1429.86 L38.94,1428.03 L39.29,1428.88 L38.61,1426.96 L35.21,1426.81 L35.21,1421.99 L38.61,1421.84 L39.29,1419.92 L38.94,1420.77 L39.81,1418.94 L37.51,1416.43 L40.93,1413.01 L43.44,1415.31 L45.27,1414.44 Z M54.699999999999996,1424.4 A5.8,5.8 0 1 0 43.1,1424.4 A5.8,5.8 0 1 0 54.699999999999996,1424.4 Z" fill="#667D97" fill-rule="evenodd" stroke="#667D97" stroke-width="1.7" stroke-linejoin="round"/>
<rect x="135.3" y="1414.8" width="30.3" height="19.6" rx="2.2" fill="none" stroke="#667D97" stroke-width="2"/>
<rect x="149.6" y="1434.4" width="1.9" height="3.8" fill="#667D97"/>
<rect x="143" y="1437.9" width="14.8" height="1.9" fill="#667D97"/>
<path d="M237.5,1424.25 Q253.5,1404.3 269.6,1424.25 Q253.5,1444.2 237.5,1424.25 Z M242.2,1424.25 Q253.5,1410.8 265,1424.25 Q253.5,1437.7 242.2,1424.25 Z" fill="#667D97" fill-rule="evenodd"/>
<circle cx="252.4" cy="1424" r="5.8" fill="#667D97"/><ellipse cx="250.7" cy="1424.2" rx="1.8" ry="2.3" fill="#1C2D43"/>
<line x1="263.0" y1="1407" x2="255.2" y2="1441" stroke="#1C2D43" stroke-width="3"/>
<line x1="259.5" y1="1409.3" x2="251.7" y2="1439.4" stroke="#667D97" stroke-width="4.2"/>
<path d="M349.5,1412.5 A12.8,12.8 0 1 0 362,1412.5" fill="none" stroke="#667D97" stroke-width="3.5"/>
<rect x="353.3" y="1409.2" width="5.4" height="12.6" fill="#667D97"/>
<polyline points="2510.8,46 2516.2,52.2 2521.7,46" fill="none" stroke="#515356" stroke-width="1.7"/>
<polyline points="1939.5,171.4 1948.9,162.4 1958.3,171.4" fill="none" stroke="#C5C7CB" stroke-width="3.7" stroke-linecap="round"/>
<polyline points="2468.0,171.4 2477.4,162.4 2486.8,171.4" fill="none" stroke="#C5C7CB" stroke-width="3.7" stroke-linecap="round"/>
<g transform="translate(1775.5,276.8) rotate(-42)"><path d="M0,0 L4.6,-3.8 H19.6 V3.8 H4.6 Z" fill="#FFFFFF"/><path d="M21,-3.8 H24.6 Q27.6,-3.8 27.6,0 Q27.6,3.8 24.6,3.8 H21 Z" fill="#FFFFFF"/><path d="M1.7,-1.1 L3.7,-2.1 V2.1 L1.7,1.1 Z" fill="#417AB6"/></g>
<path d="M2479.3,255.8 L2484.7,264.3 H2474 Z M2474,269.3 H2484.7 L2479.3,278.4 Z" fill="#4D4D4D"/>
<path d="M2277.8,576 L2271.84,380.79 A195.3,195.3 0 0 1 2277.8,380.7 Z" fill="#E8A95C"/>
<line x1="2277.8" y1="576" x2="2277.8" y2="379.7" stroke="#FFFFFF" stroke-width="4.6"/>
<line x1="2277.8" y1="576" x2="2271.84" y2="379.79" stroke="#FFFFFF" stroke-width="4.6"/>
<circle cx="2277.8" cy="576" r="3.7" fill="#FFFFFF"/>
<circle cx="1858.7" cy="435.40" r="7.3" fill="none" stroke="#333333" stroke-width="3"/>
<line x1="1864.3" y1="441.00" x2="1869.8" y2="446.50" stroke="#333333" stroke-width="3.4" stroke-linecap="round"/>
<path d="M1855,434.50 H1862.6 V436.50 H1855 Z M1857.8,431.70 H1859.7 V439.40 H1857.8 Z" fill="#333333"/>
<path d="M1923.2,436.00 V428.50 Q1923.2,427.60 1924.1,427.60 H1933 L1936,430.60 V436.00" fill="none" stroke="#333333" stroke-width="1.9"/>
<path d="M1932.6,427.60 L1936.4,431.30 H1932.6 Z" fill="#333333"/>
<path d="M1919.6,435.20 H1939.6 Q1940.2,435.20 1940.2,436.00 V442.80 H1937.2 V441.30 H1922 V442.80 H1918.6 V436.20 Q1918.6,435.20 1919.6,435.20 Z" fill="#333333"/>
<path d="M1923.1,441.50 V445.60 H1936 V441.50" fill="none" stroke="#333333" stroke-width="1.9"/>
<circle cx="1858.7" cy="529.72" r="7.3" fill="none" stroke="#333333" stroke-width="3"/>
<line x1="1864.3" y1="535.32" x2="1869.8" y2="540.82" stroke="#333333" stroke-width="3.4" stroke-linecap="round"/>
<path d="M1855,528.82 H1862.6 V530.82 H1855 Z M1857.8,526.02 H1859.7 V533.72 H1857.8 Z" fill="#333333"/>
<path d="M1923.2,530.32 V522.82 Q1923.2,521.92 1924.1,521.92 H1933 L1936,524.92 V530.32" fill="none" stroke="#333333" stroke-width="1.9"/>
<path d="M1932.6,521.92 L1936.4,525.62 H1932.6 Z" fill="#333333"/>
<path d="M1919.6,529.52 H1939.6 Q1940.2,529.52 1940.2,530.32 V537.12 H1937.2 V535.62 H1922 V537.12 H1918.6 V530.52 Q1918.6,529.52 1919.6,529.52 Z" fill="#333333"/>
<path d="M1923.1,535.82 V539.92 H1936 V535.82" fill="none" stroke="#333333" stroke-width="1.9"/>
<circle cx="1858.7" cy="624.04" r="7.3" fill="none" stroke="#333333" stroke-width="3"/>
<line x1="1864.3" y1="629.64" x2="1869.8" y2="635.14" stroke="#333333" stroke-width="3.4" stroke-linecap="round"/>
<path d="M1855,623.14 H1862.6 V625.14 H1855 Z M1857.8,620.34 H1859.7 V628.04 H1857.8 Z" fill="#333333"/>
<path d="M1923.2,624.64 V617.14 Q1923.2,616.24 1924.1,616.24 H1933 L1936,619.24 V624.64" fill="none" stroke="#333333" stroke-width="1.9"/>
<path d="M1932.6,616.24 L1936.4,619.94 H1932.6 Z" fill="#333333"/>
<path d="M1919.6,623.84 H1939.6 Q1940.2,623.84 1940.2,624.64 V631.44 H1937.2 V629.94 H1922 V631.44 H1918.6 V624.84 Q1918.6,623.84 1919.6,623.84 Z" fill="#333333"/>
<path d="M1923.1,630.14 V634.24 H1936 V630.14" fill="none" stroke="#333333" stroke-width="1.9"/>
<circle cx="1858.7" cy="718.36" r="7.3" fill="none" stroke="#333333" stroke-width="3"/>
<line x1="1864.3" y1="723.96" x2="1869.8" y2="729.46" stroke="#333333" stroke-width="3.4" stroke-linecap="round"/>
<path d="M1855,717.46 H1862.6 V719.46 H1855 Z M1857.8,714.66 H1859.7 V722.36 H1857.8 Z" fill="#333333"/>
<path d="M1923.2,718.96 V711.46 Q1923.2,710.56 1924.1,710.56 H1933 L1936,713.56 V718.96" fill="none" stroke="#333333" stroke-width="1.9"/>
<path d="M1932.6,710.56 L1936.4,714.26 H1932.6 Z" fill="#333333"/>
<path d="M1919.6,718.16 H1939.6 Q1940.2,718.16 1940.2,718.96 V725.76 H1937.2 V724.26 H1922 V725.76 H1918.6 V719.16 Q1918.6,718.16 1919.6,718.16 Z" fill="#333333"/>
<path d="M1923.1,724.46 V728.56 H1936 V724.46" fill="none" stroke="#333333" stroke-width="1.9"/>
<circle cx="1858.7" cy="812.68" r="7.3" fill="none" stroke="#333333" stroke-width="3"/>
<line x1="1864.3" y1="818.28" x2="1869.8" y2="823.78" stroke="#333333" stroke-width="3.4" stroke-linecap="round"/>
<path d="M1855,811.78 H1862.6 V813.78 H1855 Z M1857.8,808.98 H1859.7 V816.68 H1857.8 Z" fill="#333333"/>
<path d="M1923.2,813.28 V805.78 Q1923.2,804.88 1924.1,804.88 H1933 L1936,807.88 V813.28" fill="none" stroke="#333333" stroke-width="1.9"/>
<path d="M1932.6,804.88 L1936.4,808.58 H1932.6 Z" fill="#333333"/>
<path d="M1919.6,812.48 H1939.6 Q1940.2,812.48 1940.2,813.28 V820.08 H1937.2 V818.58 H1922 V820.08 H1918.6 V813.48 Q1918.6,812.48 1919.6,812.48 Z" fill="#333333"/>
<path d="M1923.1,818.78 V822.88 H1936 V818.78" fill="none" stroke="#333333" stroke-width="1.9"/>
<circle cx="1858.7" cy="907.00" r="7.3" fill="none" stroke="#333333" stroke-width="3"/>
<line x1="1864.3" y1="912.60" x2="1869.8" y2="918.10" stroke="#333333" stroke-width="3.4" stroke-linecap="round"/>
<path d="M1855,906.10 H1862.6 V908.10 H1855 Z M1857.8,903.30 H1859.7 V911.00 H1857.8 Z" fill="#333333"/>
<path d="M1923.2,907.60 V900.10 Q1923.2,899.20 1924.1,899.20 H1933 L1936,902.20 V907.60" fill="none" stroke="#333333" stroke-width="1.9"/>
<path d="M1932.6,899.20 L1936.4,902.90 H1932.6 Z" fill="#333333"/>
<path d="M1919.6,906.80 H1939.6 Q1940.2,906.80 1940.2,907.60 V914.40 H1937.2 V912.90 H1922 V914.40 H1918.6 V907.80 Q1918.6,906.80 1919.6,906.80 Z" fill="#333333"/>
<path d="M1923.1,913.10 V917.20 H1936 V913.10" fill="none" stroke="#333333" stroke-width="1.9"/>
<circle cx="1858.7" cy="1001.32" r="7.3" fill="none" stroke="#333333" stroke-width="3"/>
<line x1="1864.3" y1="1006.92" x2="1869.8" y2="1012.42" stroke="#333333" stroke-width="3.4" stroke-linecap="round"/>
<path d="M1855,1000.42 H1862.6 V1002.42 H1855 Z M1857.8,997.62 H1859.7 V1005.32 H1857.8 Z" fill="#333333"/>
<path d="M1923.2,1001.92 V994.42 Q1923.2,993.52 1924.1,993.52 H1933 L1936,996.52 V1001.92" fill="none" stroke="#333333" stroke-width="1.9"/>
<path d="M1932.6,993.52 L1936.4,997.22 H1932.6 Z" fill="#333333"/>
<path d="M1919.6,1001.12 H1939.6 Q1940.2,1001.12 1940.2,1001.92 V1008.72 H1937.2 V1007.22 H1922 V1008.72 H1918.6 V1002.12 Q1918.6,1001.12 1919.6,1001.12 Z" fill="#333333"/>
<path d="M1923.1,1007.42 V1011.52 H1936 V1007.42" fill="none" stroke="#333333" stroke-width="1.9"/>
<circle cx="1858.7" cy="1095.64" r="7.3" fill="none" stroke="#333333" stroke-width="3"/>
<line x1="1864.3" y1="1101.24" x2="1869.8" y2="1106.74" stroke="#333333" stroke-width="3.4" stroke-linecap="round"/>
<path d="M1855,1094.74 H1862.6 V1096.74 H1855 Z M1857.8,1091.94 H1859.7 V1099.64 H1857.8 Z" fill="#333333"/>
<path d="M1923.2,1096.24 V1088.74 Q1923.2,1087.84 1924.1,1087.84 H1933 L1936,1090.84 V1096.24" fill="none" stroke="#333333" stroke-width="1.9"/>
<path d="M1932.6,1087.84 L1936.4,1091.54 H1932.6 Z" fill="#333333"/>
<path d="M1919.6,1095.44 H1939.6 Q1940.2,1095.44 1940.2,1096.24 V1103.04 H1937.2 V1101.54 H1922 V1103.04 H1918.6 V1096.44 Q1918.6,1095.44 1919.6,1095.44 Z" fill="#333333"/>
<path d="M1923.1,1101.74 V1105.84 H1936 V1101.74" fill="none" stroke="#333333" stroke-width="1.9"/>
<circle cx="1858.7" cy="1189.96" r="7.3" fill="none" stroke="#333333" stroke-width="3"/>
<line x1="1864.3" y1="1195.56" x2="1869.8" y2="1201.06" stroke="#333333" stroke-width="3.4" stroke-linecap="round"/>
<path d="M1855,1189.06 H1862.6 V1191.06 H1855 Z M1857.8,1186.26 H1859.7 V1193.96 H1857.8 Z" fill="#333333"/>
<path d="M1923.2,1190.56 V1183.06 Q1923.2,1182.16 1924.1,1182.16 H1933 L1936,1185.16 V1190.56" fill="none" stroke="#333333" stroke-width="1.9"/>
<path d="M1932.6,1182.16 L1936.4,1185.86 H1932.6 Z" fill="#333333"/>
<path d="M1919.6,1189.76 H1939.6 Q1940.2,1189.76 1940.2,1190.56 V1197.36 H1937.2 V1195.86 H1922 V1197.36 H1918.6 V1190.76 Q1918.6,1189.76 1919.6,1189.76 Z" fill="#333333"/>
<path d="M1923.1,1196.06 V1200.16 H1936 V1196.06" fill="none" stroke="#333333" stroke-width="1.9"/>
<circle cx="1858.7" cy="1284.28" r="7.3" fill="none" stroke="#333333" stroke-width="3"/>
<line x1="1864.3" y1="1289.88" x2="1869.8" y2="1295.38" stroke="#333333" stroke-width="3.4" stroke-linecap="round"/>
<path d="M1855,1283.38 H1862.6 V1285.38 H1855 Z M1857.8,1280.58 H1859.7 V1288.28 H1857.8 Z" fill="#333333"/>
<path d="M1923.2,1284.88 V1277.38 Q1923.2,1276.48 1924.1,1276.48 H1933 L1936,1279.48 V1284.88" fill="none" stroke="#333333" stroke-width="1.9"/>
<path d="M1932.6,1276.48 L1936.4,1280.18 H1932.6 Z" fill="#333333"/>
<path d="M1919.6,1284.08 H1939.6 Q1940.2,1284.08 1940.2,1284.88 V1291.68 H1937.2 V1290.18 H1922 V1291.68 H1918.6 V1285.08 Q1918.6,1284.08 1919.6,1284.08 Z" fill="#333333"/>
<path d="M1923.1,1290.38 V1294.48 H1936 V1290.38" fill="none" stroke="#333333" stroke-width="1.9"/>
<circle cx="1858.7" cy="1378.60" r="7.3" fill="none" stroke="#333333" stroke-width="3"/>
<line x1="1864.3" y1="1384.20" x2="1869.8" y2="1389.70" stroke="#333333" stroke-width="3.4" stroke-linecap="round"/>
<path d="M1855,1377.70 H1862.6 V1379.70 H1855 Z M1857.8,1374.90 H1859.7 V1382.60 H1857.8 Z" fill="#333333"/>
<path d="M1923.2,1379.20 V1371.70 Q1923.2,1370.80 1924.1,1370.80 H1933 L1936,1373.80 V1379.20" fill="none" stroke="#333333" stroke-width="1.9"/>
<path d="M1932.6,1370.80 L1936.4,1374.50 H1932.6 Z" fill="#333333"/>
<path d="M1919.6,1378.40 H1939.6 Q1940.2,1378.40 1940.2,1379.20 V1386.00 H1937.2 V1384.50 H1922 V1386.00 H1918.6 V1379.40 Q1918.6,1378.40 1919.6,1378.40 Z" fill="#333333"/>
<path d="M1923.1,1384.70 V1388.80 H1936 V1384.70" fill="none" stroke="#333333" stroke-width="1.9"/>
</svg></body></html>
